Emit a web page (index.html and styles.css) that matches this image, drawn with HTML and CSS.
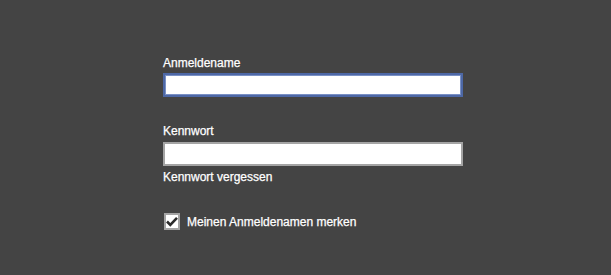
FILE: index.html
```html
<!DOCTYPE html>
<html lang="de">
<head>
    <meta charset="UTF-8">
    <meta name="viewport" content="width=device-width, initial-scale=1.0">
    <title>Anmelden</title>
    <link rel="stylesheet" href="styles.css">
</head>
<body>
    <form class="login">
        <label class="field-label" for="user">Anmeldename</label>
        <input class="field field-focus" id="user" type="text">

        <label class="field-label field-label-second" for="pass">Kennwort</label>
        <input class="field" id="pass" type="password">
        <a class="forgot" href="#">Kennwort vergessen</a>

        <label class="remember">
            <span class="check">
                <svg width="12" height="11" viewBox="0 0 12 11">
                    <path d="M1 5.5 L4.3 8.8 L11 1.8" fill="none" stroke="#2b2b2b" stroke-width="2.6"/>
                </svg>
            </span>
            <span>Meinen Anmeldenamen merken</span>
        </label>
    </form>
</body>
</html>
```

FILE: styles.css
```css
html {
  box-sizing: border-box;
}

*,
*:before,
*:after {
  box-sizing: inherit;
}

body {
  margin: 0;
  background: #444444;
  color: #fff;
  font-family: "Liberation Sans", Arial, sans-serif;
  font-size: 12px;
  line-height: 14px;
  -webkit-text-stroke: 0.25px #fff;
}

.login {
  display: flex;
  flex-direction: column;
  align-items: flex-start;
  width: 300px;
  margin-left: 163px;
  padding-top: 56px;
}

.field-label {
  display: block;
  margin-bottom: 3px;
}

.field-label-second {
  margin-top: 27px;
  margin-bottom: 4px;
}

.field {
  display: block;
  width: 300px;
  height: 24px;
  margin: 0;
  padding: 0 4px;
  border: 2px solid #a4a4a4;
  background: #fff;
  font: inherit;
  outline: none;
}

.field-focus {
  border-color: #4d68a6;
  box-shadow: inset 0 0 0 1px #7a90c4;
}

.forgot {
  display: block;
  margin-top: 4px;
  color: #fff;
  text-decoration: none;
}

.remember {
  display: flex;
  align-items: center;
  gap: 7px;
  margin-top: 29px;
  margin-left: 1px;
}

.check {
  display: flex;
  align-items: center;
  justify-content: center;
  width: 16px;
  height: 17px;
  border: 2px solid #a4a4a4;
  background: #fff;
}
```
